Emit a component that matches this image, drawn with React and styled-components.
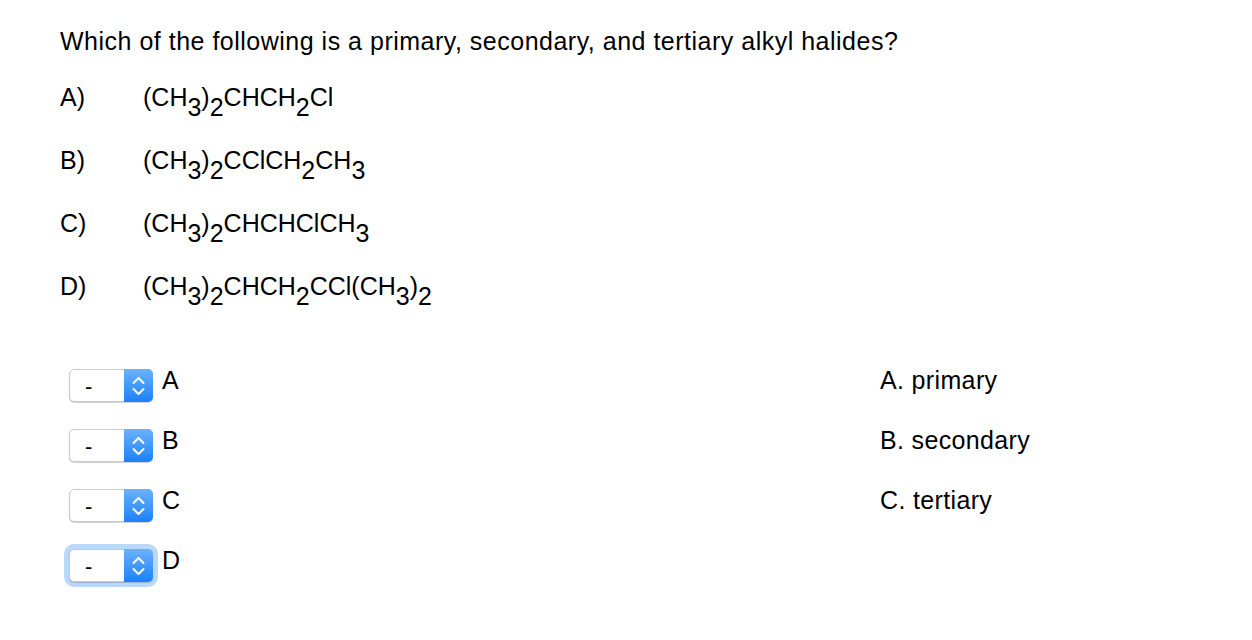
import styled, { createGlobalStyle } from "styled-components";

const GlobalStyle = createGlobalStyle`
  body {
    margin: 0;
    background: #ffffff;
    color: #000000;
    font-family: "Liberation Sans", Arial, Helvetica, sans-serif;
  }
`;

const Page = styled.div`
  box-sizing: border-box;
  width: 1252px;
  height: 640px;
  padding: 27px 60px 0;
  font-size: 25px;
  line-height: 28px;
`;

const Question = styled.div`
  margin-bottom: 28px;
  letter-spacing: 0.5px;
  white-space: nowrap;
`;

const OptionList = styled.div`
  display: flex;
  flex-direction: column;
  gap: 35px;
`;

const Option = styled.div`
  display: flex;
  height: 28px;
`;

const OptionLabel = styled.span`
  width: 83px;
  flex: none;
`;

const Formula = styled.span`
  white-space: nowrap;
`;

const Sub = styled.span`
  position: relative;
  top: 10px;
`;

const Match = styled.div`
  margin-top: 69px;
  display: grid;
  grid-template-columns: 820px 1fr;
  row-gap: 27px;
`;

const MatchLeft = styled.div`
  display: flex;
  align-items: flex-start;
  padding-left: 9px;
  height: 33px;
`;

const MatchRight = styled.div`
  height: 33px;
  line-height: 22px;
  box-sizing: border-box;
  letter-spacing: 0.35px;
`;

const SelectBox = styled.div`
  box-sizing: border-box;
  display: flex;
  width: 84px;
  height: 33px;
  border: 1px solid #c9c9c9;
  border-radius: 5px;
  background: #ffffff;
  box-shadow: 0 1px 1px rgba(0, 0, 0, 0.18)
    ${(p) => (p.$focused ? ", 0 0 0 5px #b9d8fa" : "")};
`;

const SelectValue = styled.div`
  flex: 1;
  padding-left: 15px;
  font-size: 22px;
  line-height: 34px;
`;

const SelectButton = styled.div`
  width: 29px;
  margin: -1px -1px -1px 0;
  border-radius: 0 5px 5px 0;
  background: linear-gradient(#6cb2fb, #1b80fa);
  display: flex;
  align-items: center;
  justify-content: center;
`;

const Letter = styled.span`
  margin-left: 9px;
  line-height: 22px;
`;

const Chevrons = () => (
  <svg width="13" height="20" viewBox="0 0 13 20" fill="none">
    <path
      d="M1.5 7 L6.5 2 L11.5 7"
      stroke="#ffffff"
      strokeWidth="2"
      strokeLinecap="round"
      strokeLinejoin="round"
    />
    <path
      d="M1.5 13 L6.5 18 L11.5 13"
      stroke="#ffffff"
      strokeWidth="2"
      strokeLinecap="round"
      strokeLinejoin="round"
    />
  </svg>
);

function Select({ focused }) {
  return (
    <SelectBox $focused={focused}>
      <SelectValue>-</SelectValue>
      <SelectButton>
        <Chevrons />
      </SelectButton>
    </SelectBox>
  );
}

const options = [
  { label: "A)", parts: ["(CH", "3", ")", "2", "CHCH", "2", "Cl"] },
  { label: "B)", parts: ["(CH", "3", ")", "2", "CClCH", "2", "CH", "3"] },
  { label: "C)", parts: ["(CH", "3", ")", "2", "CHCHClCH", "3"] },
  { label: "D)", parts: ["(CH", "3", ")", "2", "CHCH", "2", "CCl(CH", "3", ")", "2"] },
];

const matches = [
  { letter: "A", answer: "A. primary" },
  { letter: "B", answer: "B. secondary" },
  { letter: "C", answer: "C. tertiary" },
  { letter: "D", answer: "" },
];

export default function App() {
  return (
    <>
      <GlobalStyle />
      <Page>
        <Question>
          Which of the following is a primary, secondary, and tertiary alkyl halides?
        </Question>
        <OptionList>
          {options.map((o) => (
            <Option key={o.label}>
              <OptionLabel>{o.label}</OptionLabel>
              <Formula>
                {o.parts.map((p, i) =>
                  i % 2 === 1 ? <Sub key={i}>{p}</Sub> : <span key={i}>{p}</span>
                )}
              </Formula>
            </Option>
          ))}
        </OptionList>
        <Match>
          {matches.flatMap((m) => [
            <MatchLeft key={m.letter}>
              <Select focused={m.letter === "D"} />
              <Letter>{m.letter}</Letter>
            </MatchLeft>,
            <MatchRight key={m.letter + "r"}>{m.answer}</MatchRight>,
          ])}
        </Match>
      </Page>
    </>
  );
}
